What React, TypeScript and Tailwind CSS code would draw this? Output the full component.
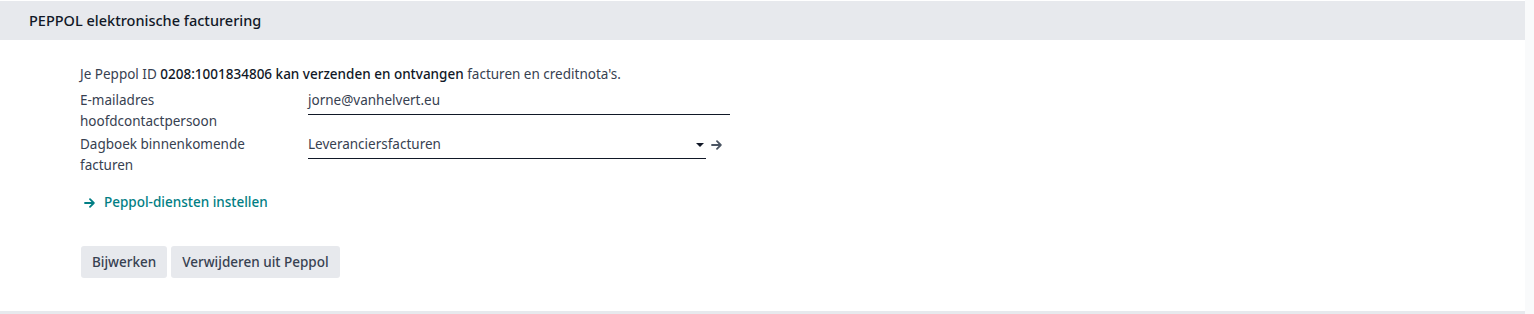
export default function App() {
    return (
        <div className="flex h-[314px] w-[1534px] bg-[#f9fafb] font-['Noto_Sans',sans-serif] text-[13.5px] text-[#374151]">
            <div className="flex w-[1525px] flex-col bg-white">
                {/* Section header */}
                <div className="mt-px flex h-[39px] shrink-0 items-center bg-[#e7e9ed] pl-[29px]">
                    <h3 className="text-[14.5px] font-medium text-[#111827]">PEPPOL elektronische facturering</h3>
                </div>

                {/* Body */}
                <div className="pl-[80px] pt-[24px]">
                    <p className="leading-[21px]">
                        Je Peppol ID <span className="font-medium text-[#111827]">0208:1001834806 kan verzenden en ontvangen</span> facturen en creditnota's.
                    </p>

                    <div className="mt-[5px] grid grid-cols-[228px_422px] gap-y-[2px] leading-[21px]">
                        <label className="pr-4">E-mailadres hoofdcontactpersoon</label>
                        <div className="self-start border-b border-[#111827] pb-[3px]">jorne@vanhelvert.eu</div>

                        <label className="w-[180px]">Dagboek binnenkomende facturen</label>
                        <div className="flex items-start self-start">
                            <div className="flex w-[398px] items-center justify-between border-b border-[#111827] pb-[3px]">
                                <span>Leveranciersfacturen</span>
                                <svg className="mr-[2px] h-[6px] w-[8px] text-[#111827]" viewBox="0 0 8 6">
                                    <path d="M0 1h8L4 5z" fill="currentColor" />
                                </svg>
                            </div>
                            <svg className="ml-[5px] mt-[6px] h-[10px] w-[11px] text-[#4b5563]" viewBox="0 0 11 10" fill="none" stroke="currentColor" strokeWidth={1.8} strokeLinecap="round" strokeLinejoin="round">
                                <path d="M1 5h8.5M6 1.2 9.8 5 6 8.8" />
                            </svg>
                        </div>
                    </div>

                    <a href="#" className="mt-[16px] flex items-center gap-[9px] pl-[4px] font-medium leading-[21px] text-[#017e84]">
                        <svg className="h-[10px] w-[11px]" viewBox="0 0 11 10" fill="none" stroke="currentColor" strokeWidth={1.8} strokeLinecap="round" strokeLinejoin="round">
                            <path d="M1 5h8.5M6 1.2 9.8 5 6 8.8" />
                        </svg>
                        Peppol-diensten instellen
                    </a>

                    <div className="mt-[33px] flex gap-[4px] pl-px">
                        <button className="h-[32px] rounded-[3px] bg-[#e7e9ed] px-[11px] font-medium text-[#374151]">Bijwerken</button>
                        <button className="h-[32px] rounded-[3px] bg-[#e7e9ed] px-[11px] font-medium text-[#374151]">Verwijderen uit Peppol</button>
                    </div>
                </div>

                <div className="mt-[33px] h-[3px] shrink-0 bg-[#e7e9ed]" />
            </div>
            <div className="flex-1" />
        </div>
    );
}
